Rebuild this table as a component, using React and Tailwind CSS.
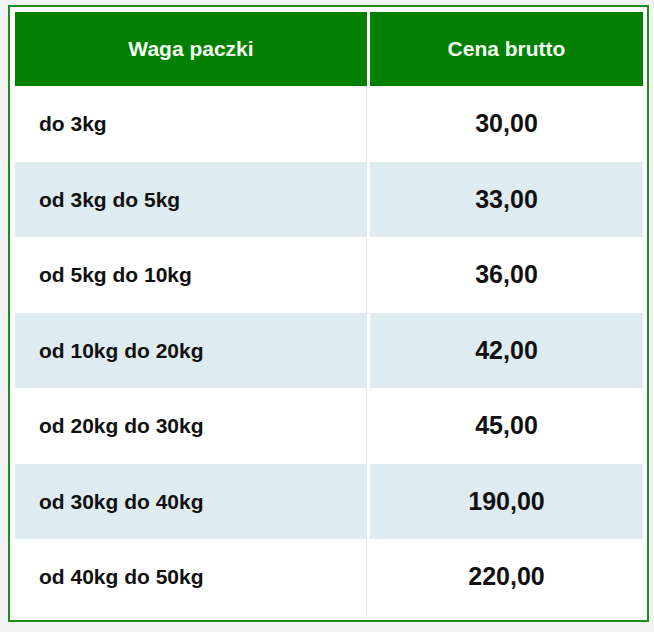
export default function App() {
  const rows = [
    ["do 3kg", "30,00"],
    ["od 3kg do 5kg", "33,00"],
    ["od 5kg do 10kg", "36,00"],
    ["od 10kg do 20kg", "42,00"],
    ["od 20kg do 30kg", "45,00"],
    ["od 30kg do 40kg", "190,00"],
    ["od 40kg do 50kg", "220,00"],
  ];
  return (
    <div
      className="w-[654px] h-[632px] bg-[#f2f2f2] pt-[5px] pl-[8px]"
      style={{ fontFamily: '"Liberation Sans", Arial, sans-serif' }}
    >
      <div className="w-[641px] border-2 border-[#1e8c1e] bg-white pt-[5px] pb-[5px] pl-[5px] pr-[4px]">
        <div className="grid grid-cols-[352px_273px] gap-x-[3px]">
          <div className="h-[74px] bg-[#038003] flex items-center justify-center text-[21px] font-bold text-[#f3fff3]">
            Waga paczki
          </div>
          <div className="h-[74px] bg-[#038003] flex items-center justify-center text-[21px] font-bold text-[#f3fff3]">
            Cena brutto
          </div>
          {rows.map(([w, p], i) => {
            const blue = i % 2 === 1;
            return [
              <div
                key={"w" + i}
                className={
                  "h-[75.5px] flex items-center pl-[24px] text-[21px] font-bold text-[#111] " +
                  (blue ? "bg-[#deecf2]" : "bg-white border-r border-[#e0edf3]")
                }
              >
                {w}
              </div>,
              <div
                key={"p" + i}
                className={
                  "h-[75.5px] flex items-center justify-center text-[25px] font-bold text-[#111] " +
                  (blue ? "bg-[#deecf2]" : "bg-white")
                }
              >
                {p}
              </div>,
            ];
          })}
        </div>
      </div>
    </div>
  );
}
